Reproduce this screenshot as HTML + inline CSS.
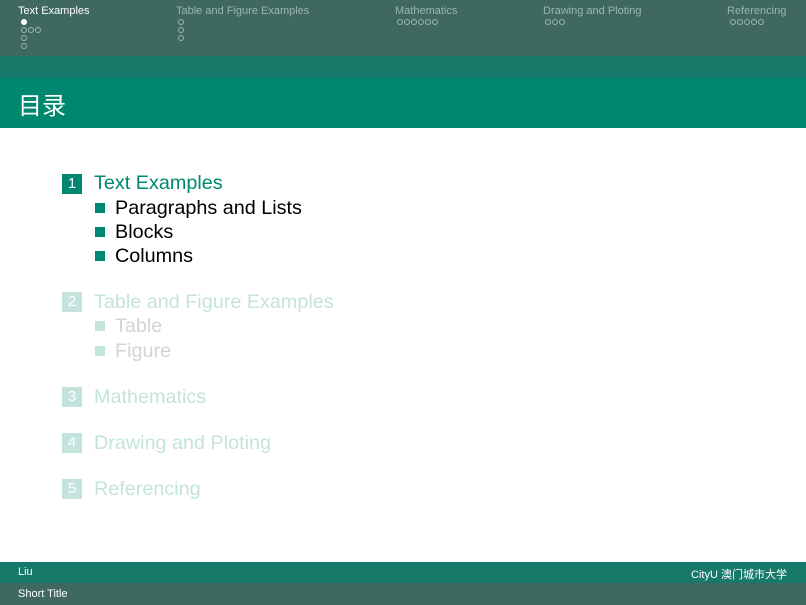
<!DOCTYPE html>
<html><head><meta charset="utf-8"><style>
*{margin:0;padding:0;box-sizing:border-box}
body{width:806px;height:605px;position:relative;overflow:hidden;background:#fff;font-family:"Liberation Sans","Noto Sans CJK SC",sans-serif}
.a{position:absolute;white-space:nowrap}
.nav{font-size:11px;color:#9bb5b0;top:5px}
.c{position:absolute;width:6px;height:6px;border:1px solid #9bb5b0;border-radius:50%}
.f{background:#fff;border-color:#fff}
.box{position:absolute;left:62px;width:20px;height:20px;color:#fff;font-size:15px;text-align:center;line-height:20px}
.sq{position:absolute;left:95px;width:10px;height:10px}
.t{font-size:19.8px}
</style></head><body>
<div class="a" style="left:0;top:0;width:806px;height:56px;background:#3f6861"></div>
<div class="a" style="left:0;top:56px;width:806px;height:22px;background:#17796a"></div>
<div class="a" style="left:0;top:78px;width:806px;height:50px;background:#00876f"></div>
<div class="a nav" style="left:18px;color:#fff">Text Examples</div>
<div class="a nav" style="left:176px">Table and Figure Examples</div>
<div class="a nav" style="left:395px">Mathematics</div>
<div class="a nav" style="left:543px">Drawing and Ploting</div>
<div class="a nav" style="left:727px">Referencing</div>
<div class="c f" style="left:21px;top:19px"></div>
<div class="c" style="left:21px;top:27px"></div><div class="c" style="left:28px;top:27px"></div><div class="c" style="left:35px;top:27px"></div>
<div class="c" style="left:21px;top:35px"></div><div class="c" style="left:21px;top:43px"></div>
<div class="c" style="left:178px;top:19px"></div><div class="c" style="left:178px;top:27px"></div><div class="c" style="left:178px;top:35px"></div>
<div class="c" style="left:397px;top:19px"></div><div class="c" style="left:404px;top:19px"></div><div class="c" style="left:411px;top:19px"></div><div class="c" style="left:418px;top:19px"></div><div class="c" style="left:425px;top:19px"></div><div class="c" style="left:432px;top:19px"></div>
<div class="c" style="left:545px;top:19px"></div><div class="c" style="left:552px;top:19px"></div><div class="c" style="left:559px;top:19px"></div>
<div class="c" style="left:730px;top:19px"></div><div class="c" style="left:737px;top:19px"></div><div class="c" style="left:744px;top:19px"></div><div class="c" style="left:751px;top:19px"></div><div class="c" style="left:758px;top:19px"></div>
<div class="a" style="left:18px;top:86px;font-size:24px;color:#fff">目录</div>

<div class="box" style="top:174px;background:#00876f">1</div>
<div class="a t" style="left:94px;top:172px;color:#00876f">Text Examples</div>
<div class="sq" style="top:203px;background:#00876f"></div><div class="a t" style="left:115px;top:197px;color:#000">Paragraphs and Lists</div>
<div class="sq" style="top:227px;background:#00876f"></div><div class="a t" style="left:115px;top:221px;color:#000">Blocks</div>
<div class="sq" style="top:251px;background:#00876f"></div><div class="a t" style="left:115px;top:245px;color:#000">Columns</div>

<div class="box" style="top:292px;background:#c4e3dd">2</div>
<div class="a t" style="left:94px;top:291px;color:#c4e3dd">Table and Figure Examples</div>
<div class="sq" style="top:321px;background:#c4e3dd"></div><div class="a t" style="left:115px;top:315px;color:#d3d3d3">Table</div>
<div class="sq" style="top:346px;background:#c4e3dd"></div><div class="a t" style="left:115px;top:340px;color:#d3d3d3">Figure</div>

<div class="box" style="top:387px;background:#c4e3dd">3</div>
<div class="a t" style="left:94px;top:386px;color:#c4e3dd">Mathematics</div>
<div class="box" style="top:433px;background:#c4e3dd">4</div>
<div class="a t" style="left:94px;top:432px;color:#c4e3dd">Drawing and Ploting</div>
<div class="box" style="top:479px;background:#c4e3dd">5</div>
<div class="a t" style="left:94px;top:478px;color:#c4e3dd">Referencing</div>

<div class="a" style="left:0;top:562px;width:806px;height:21px;background:#17796a"></div>
<div class="a" style="left:0;top:583px;width:806px;height:22px;background:#3f6861"></div>
<div class="a" style="left:18px;top:566px;font-size:11px;color:#fff">Liu</div>
<div class="a" style="right:19px;top:566px;font-size:11px;color:#fff">CityU 澳门城市大学</div>
<div class="a" style="left:18px;top:588px;font-size:11px;color:#fff">Short Title</div>
</body></html>
